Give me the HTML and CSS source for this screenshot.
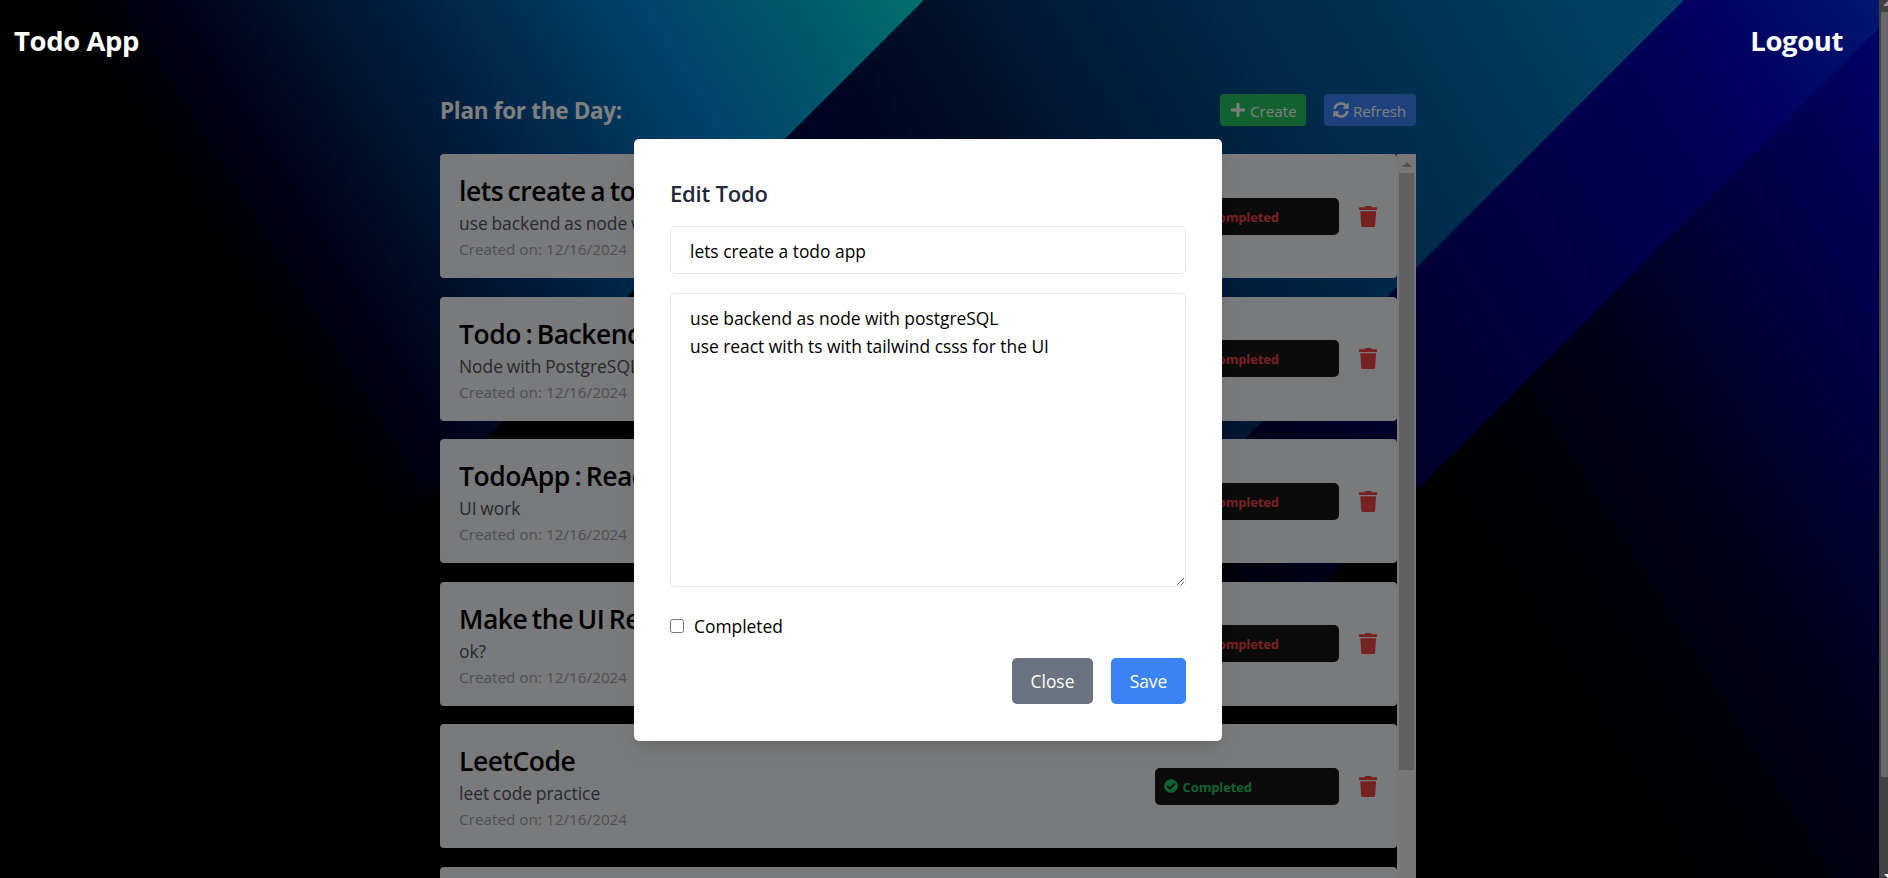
FILE: index.html
```html
<!DOCTYPE html>
<html lang="en">
<head>
<meta charset="utf-8">
<title>Todo App</title>
<link rel="stylesheet" href="styles.css">
</head>
<body>
<svg class="scene" viewBox="0 0 1879 878" aria-hidden="true">
  <defs>
    <linearGradient id="ga" gradientUnits="userSpaceOnUse" x1="0" y1="0" x2="1360" y2="-843">
      <stop offset=".03" stop-color="#000"/><stop offset=".09" stop-color="#000030"/><stop offset=".154" stop-color="#002458"/><stop offset=".213" stop-color="#004080"/><stop offset=".34" stop-color="#0088d8"/><stop offset=".40" stop-color="#00a6d4"/><stop offset=".49" stop-color="#00e0dc"/>
    </linearGradient>
    <linearGradient id="gb" gradientUnits="userSpaceOnUse" x1="0" y1="0" x2="1360" y2="-843">
      <stop offset=".23" stop-color="#000"/><stop offset=".372" stop-color="#000040"/><stop offset=".49" stop-color="#002050"/><stop offset=".531" stop-color="#003068"/><stop offset=".664" stop-color="#005494"/><stop offset=".894" stop-color="#0088d0"/>
    </linearGradient>
    <linearGradient id="gc" gradientUnits="userSpaceOnUse" x1="0" y1="0" x2="1360" y2="-843">
      <stop offset=".42" stop-color="#000"/><stop offset=".525" stop-color="#000038"/><stop offset=".664" stop-color="#00006c"/><stop offset=".871" stop-color="#0000b4"/><stop offset=".9" stop-color="#0000c4"/><stop offset=".998" stop-color="#0030e0"/>
    </linearGradient>
    <linearGradient id="gd" gradientUnits="userSpaceOnUse" x1="0" y1="0" x2="1360" y2="-843">
      <stop offset=".6" stop-color="#000"/><stop offset=".687" stop-color="#00001c"/><stop offset=".763" stop-color="#000040"/><stop offset=".857" stop-color="#000080"/><stop offset=".985" stop-color="#0000d0"/>
    </linearGradient>
  </defs>
  <rect width="1879" height="878" fill="url(#gd)"/>
  <path d="M0 0H1907L1029 878H0z" fill="url(#gc)"/>
  <path d="M0 0H1684L806 878H0z" fill="url(#gb)"/>
  <path d="M0 0H924L46 878H0z" fill="url(#ga)"/>
</svg>
<svg class="symbols" aria-hidden="true">
  <symbol id="trash" viewBox="0 0 448 512"><path d="M432 32H312l-9.400-18.700A24 24 0 0 0 281.100 0H166.800a23.720 23.720 0 0 0-21.400 13.300L136 32H16A16 16 0 0 0 0 48v32a16 16 0 0 0 16 16h416a16 16 0 0 0 16-16V48a16 16 0 0 0-16-16zM53.200 467a48 48 0 0 0 47.900 45h245.800a48 48 0 0 0 47.900-45L416 128H32z"/></symbol>
  <symbol id="check" viewBox="0 0 512 512"><path d="M504 256c0 136.967-111.033 248-248 248S8 392.967 8 256 119.033 8 256 8s248 111.033 248 248zM227.314 387.314l184-184c6.248-6.248 6.248-16.379 0-22.627l-22.627-22.627c-6.248-6.249-16.379-6.249-22.628 0L216 308.118l-70.059-70.059c-6.248-6.248-16.379-6.248-22.628 0l-22.627 22.627c-6.248 6.248-6.248 16.379 0 22.627l104 104c6.249 6.249 16.379 6.249 22.628.001z"/></symbol>
</svg>

<header class="topbar">
  <a class="brand">Todo App</a>
  <a class="brand">Logout</a>
</header>

<main class="board">
  <div class="board-head">
    <h2 class="board-title">Plan for the Day:</h2>
    <div class="actions">
      <button class="btn btn-create"><svg class="ico-plus" viewBox="0 0 448 512"><path d="M416 208H272V64c0-17.670-14.330-32-32-32h-32c-17.670 0-32 14.330-32 32v144H32c-17.670 0-32 14.330-32 32v32c0 17.670 14.330 32 32 32h144v144c0 17.670 14.330 32 32 32h32c17.670 0 32-14.330 32-32V304h144c17.670 0 32-14.330 32-32v-32c0-17.670-14.330-32-32-32z"/></svg><span>Create</span></button>
      <button class="btn btn-refresh"><svg class="ico-sync" viewBox="0 0 512 512"><path d="M370.720 133.280C339.458 104.008 298.888 87.962 255.848 88c-77.458.068-144.328 53.178-162.791 126.850-1.344 5.363-6.122 9.150-11.651 9.150H24.103c-7.498 0-13.194-6.807-11.807-14.176C33.933 94.924 134.813 8 256 8c66.448 0 126.791 26.136 171.315 68.685L463.030 40.970C478.149 25.851 504 36.559 504 57.941V192c0 13.255-10.745 24-24 24H345.941c-21.382 0-32.090-25.851-16.971-40.971l41.750-41.749zM32 296h134.059c21.382 0 32.090 25.851 16.971 40.971l-41.750 41.750c31.262 29.273 71.835 45.319 114.876 45.280 77.418-.070 144.315-53.144 162.787-126.849 1.344-5.363 6.122-9.150 11.651-9.150h57.304c7.498 0 13.194 6.807 11.807 14.176C478.067 417.076 377.187 504 256 504c-66.448 0-126.791-26.136-171.315-68.685L48.970 471.030C33.851 486.149 8 475.441 8 454.059V320c0-13.255 10.745-24 24-24z"/></svg><span>Refresh</span></button>
    </div>
  </div>
  <div class="scroller">
    <div class="list">
      <article class="card">
        <div class="info"><h3>lets create a todo app</h3><p class="desc">use backend as node with postgreSQL</p><p class="date">Created on: 12/16/2024</p></div>
        <div class="badge todo"><svg class="ico-check"><use href="#check"/></svg>Not Completed</div>
        <svg class="ico-trash"><use href="#trash"/></svg>
      </article>
      <article class="card">
        <div class="info"><h3>Todo : Backend</h3><p class="desc">Node with PostgreSQL</p><p class="date">Created on: 12/16/2024</p></div>
        <div class="badge todo"><svg class="ico-check"><use href="#check"/></svg>Not Completed</div>
        <svg class="ico-trash"><use href="#trash"/></svg>
      </article>
      <article class="card">
        <div class="info"><h3>TodoApp : React</h3><p class="desc">UI work</p><p class="date">Created on: 12/16/2024</p></div>
        <div class="badge todo"><svg class="ico-check"><use href="#check"/></svg>Not Completed</div>
        <svg class="ico-trash"><use href="#trash"/></svg>
      </article>
      <article class="card">
        <div class="info"><h3>Make the UI Responsive</h3><p class="desc">ok?</p><p class="date">Created on: 12/16/2024</p></div>
        <div class="badge todo"><svg class="ico-check"><use href="#check"/></svg>Not Completed</div>
        <svg class="ico-trash"><use href="#trash"/></svg>
      </article>
      <article class="card">
        <div class="info"><h3>LeetCode</h3><p class="desc">leet code practice</p><p class="date">Created on: 12/16/2024</p></div>
        <div class="badge done"><svg class="ico-check"><use href="#check"/></svg>Completed</div>
        <svg class="ico-trash"><use href="#trash"/></svg>
      </article>
      <article class="card"></article>
    </div>
    <div class="track"><i class="arrow"></i><i class="thumb"></i></div>
  </div>
</main>

<div class="overlay">
  <section class="modal">
    <h2 class="modal-title">Edit Todo</h2>
    <input class="field" type="text" value="lets create a todo app">
    <textarea class="field area">use backend as node with postgreSQL
use react with ts with tailwind csss for the UI</textarea>
    <label class="check-row"><input type="checkbox" class="box"><span>Completed</span></label>
    <div class="modal-actions">
      <button class="mbtn close">Close</button>
      <button class="mbtn save">Save</button>
    </div>
  </section>
</div>

<div class="page-track">
  <svg class="page-up" viewBox="0 0 9 12"><path d="M9 1v5H4z"/></svg>
  <i class="page-thumb"></i>
  <svg class="page-down" viewBox="0 0 9 4"><path d="M5 0h4v4z"/></svg>
</div>
</body>
</html>
```

FILE: styles.css
```css
* { box-sizing: border-box; margin: 0; }
body {
  height: 878px;
  overflow: hidden;
  position: relative;
  background: #000;
  font-family: "Open Sans", "Noto Sans", sans-serif;
  font-size: 17.400px;
  line-height: 27px;
}
button, input, textarea { font: inherit; }
.scene { position: absolute; left: 0; top: 0; width: 1879px; height: 878px; }
.symbols { position: absolute; width: 0; height: 0; }

.topbar {
  position: relative;
  z-index: 3;
  width: 1856px;
  height: 80px;
  padding: 0 13px 0 14px;
  display: flex;
  justify-content: space-between;
  align-items: center;
  color: #fff;
}
.brand { font-size: 27.500px; font-weight: 700; letter-spacing: -.4px; }

.board { position: relative; width: 976px; margin-left: 440px; }
.board-head { display: flex; justify-content: space-between; align-items: center; height: 60px; }
.board-title { font-size: 22.500px; font-weight: 700; color: #fff; letter-spacing: -.3px; }
.actions { display: flex; gap: 18px; }
.btn {
  height: 32px;
  border: 0;
  border-radius: 4px;
  color: #fff;
  font-size: 15.200px;
  display: flex;
  align-items: center;
}
.btn span { padding-top: 2px; }
.btn svg { fill: #fff; flex: none; }
.btn-create { width: 86px; background: #22c55e; padding: 0 0 0 11px; gap: 5px; }
.btn-refresh { width: 92px; background: #3b82f6; padding: 0 0 0 9px; gap: 4px; }
.btn-refresh span { letter-spacing: -.2px; }
.ico-plus { width: 14px; height: 16px; }
.ico-sync { width: 16px; height: 16px; }

.scroller { display: flex; height: 724px; margin-top: 14px; overflow: hidden; }
.list { width: 957px; display: flex; flex-direction: column; gap: 18.600px; }
.card {
  flex: none;
  height: 124px;
  padding: 0 20px 0 19px;
  border-radius: 4px;
  background: #f3f4f6;
  display: flex;
  align-items: center;
}
.info { flex: 1; height: 88px; padding-top: 1px; }
.info h3 { font-size: 26.500px; line-height: 36px; font-weight: 600; color: #000; letter-spacing: -.5px; word-spacing: -1.800px; margin-bottom: 1px; }
.desc { color: #4b5563; margin-bottom: 1px; word-spacing: -.8px; }
.date { color: #9ca3af; font-size: 15.300px; line-height: 22.500px; }
.badge {
  width: 184px;
  height: 37px;
  padding: 2px 0 0 9px;
  border-radius: 5px;
  background: #171717;
  display: flex;
  align-items: center;
  gap: 5px;
  font-size: 13px;
  font-weight: 700;
  letter-spacing: -.15px;
}
.todo { color: #ef4444; }
.done { color: #22c55e; }
.ico-check { width: 14px; height: 14px; fill: currentColor; margin-top: -3px; }
.ico-trash { width: 18.400px; height: 21px; fill: #ef4444; margin-left: 20px; }
.track { width: 19px; background: #f1f1f1; display: flex; flex-direction: column; align-items: center; padding-top: 8px; }
.arrow { border: 5px solid transparent; border-top: 0; border-bottom-color: #a3a3a3; }
.thumb { width: 15px; height: 597px; margin-top: 6px; background: #c1c1c1; }

.overlay {
  position: absolute;
  inset: 0;
  z-index: 2;
  padding: 1px 32px 0 0;
  display: flex;
  justify-content: center;
  align-items: center;
  background: rgba(0, 0, 0, .5);
}
.modal {
  width: 588px;
  height: 602px;
  padding: 36px;
  border-radius: 5px;
  background: #fff;
  box-shadow: 0 11px 17px -3px rgba(0, 0, 0, .1), 0 4px 7px -4px rgba(0, 0, 0, .1);
  display: flex;
  flex-direction: column;
}
.modal-title { font-size: 22px; font-weight: 600; line-height: 33px; color: #1f2937; padding-top: 2px; margin-bottom: 16px; letter-spacing: -.2px; }
.field {
  width: 516px;
  height: 48px;
  padding: 3px 19px 0;
  border: 1px solid #e5e7eb;
  border-radius: 5px;
  color: #000;
  background: #fff;
  outline: 0;
}
.area { height: 294px; padding: 10px 19px; margin-top: 19px; line-height: 28px; display: block; }
.check-row { display: flex; align-items: center; gap: 10px; margin-top: 26px; height: 27px; }
.box { width: 14px; height: 14px; margin: 0; }
.modal-actions { display: flex; justify-content: flex-end; gap: 18px; margin-top: 18px; }
.mbtn { height: 46px; border: 0; border-radius: 5px; color: #fff; padding: 2px 0 0; }
.close { width: 81px; background: #6b7280; }
.save { width: 75px; background: #3b82f6; }

.page-track {
  position: absolute;
  z-index: 4;
  right: 0;
  top: 0;
  width: 9px;
  height: 878px;
  background: #424242;
  display: flex;
  flex-direction: column;
}
.page-up { width: 9px; height: 12px; fill: #9a9a9a; }
.page-thumb { width: 7px; height: 765px; margin-left: 2px; background: #686868; }
.page-down { width: 9px; height: 4px; margin-top: auto; fill: #fff; }
```
